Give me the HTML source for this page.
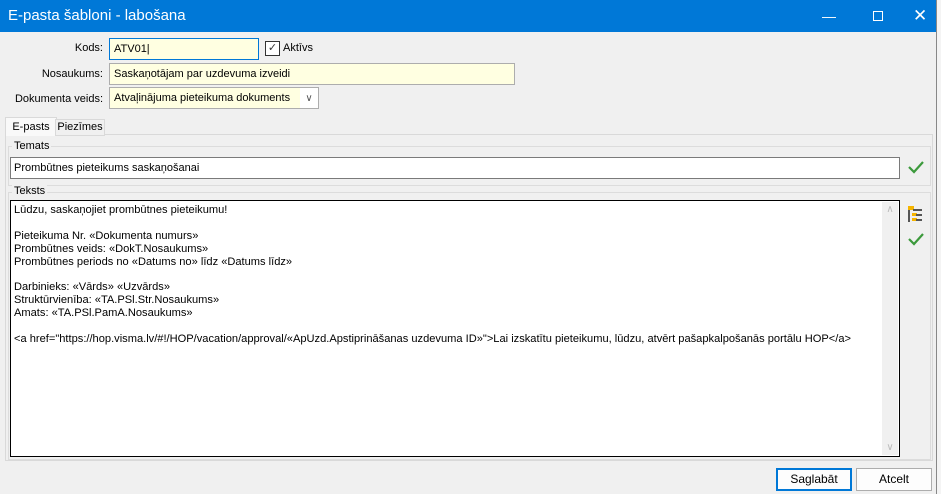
<!DOCTYPE html><html><head><meta charset="utf-8"><style>
body{margin:0;width:941px;height:494px;background:#fff;font-family:"Liberation Sans",sans-serif;font-size:11px;color:#000;position:relative;overflow:hidden}
.a{position:absolute}
.win{left:0;top:0;width:936px;height:494px;background:#f0f0f0;border-right:1px solid #888}
.title{left:0;top:0;width:936px;height:32px;background:#0078d7;color:#fff;font-size:15px;line-height:32px}
.lbl{text-align:right;width:100px;left:3px}
.inp{background:#ffffe1;border:1px solid #adadad;box-sizing:border-box;padding-left:4px;line-height:19px}
.grp{border:1px solid #dcdcdc;box-sizing:border-box}
.btn{border:1px solid #adadad;background:#fdfdfd;box-sizing:border-box;text-align:center;line-height:21px;height:23px;font-size:12px}
</style></head><body>
<div class="a" style="left:936px;top:0;width:5px;height:494px;background:#f4f4f4"></div>
<div class="a win"></div>
<div class="a title"><span style="margin-left:8px">E-pasta šabloni - labošana</span>
<span class="a" style="left:822px;top:0;font-size:14px">&#8212;</span>
<span class="a" style="left:873px;top:11px;width:8px;height:8px;border:1px solid #fff"></span>
<span class="a" style="left:913px;top:0;font-size:17px">✕</span></div>
<div class="a lbl" style="top:42px">Kods:</div>
<div class="a inp" style="left:109px;top:38px;width:150px;height:22px;border-color:#0078d7;line-height:20px">ATV01|</div>
<div class="a" style="left:265px;top:41px;width:13px;height:13px;border:1px solid #333;background:#fff;font-size:11px;line-height:13px;text-align:center;color:#333">✓</div>
<div class="a" style="left:283px;top:42px">Aktīvs</div>
<div class="a lbl" style="top:68px">Nosaukums:</div>
<div class="a inp" style="left:109px;top:63px;width:406px;height:22px;line-height:20px">Saskaņotājam par uzdevuma izveidi</div>
<div class="a lbl" style="top:93px">Dokumenta veids:</div>
<div class="a inp" style="left:109px;top:87px;width:210px;height:22px;line-height:21px">Atvaļinājuma pieteikuma dokuments<span class="a" style="left:190px;top:0;width:18px;height:20px;background:#fff;color:#555;font-size:10px;text-align:center">&#8744;</span></div>
<div class="a" style="left:5px;top:134px;width:928px;height:327px;background:#f0f0f0;border:1px solid #d9d9d9;box-sizing:border-box"></div>
<div class="a" style="left:5px;top:117px;width:50px;height:18px;background:#f9f9f9;border:1px solid #d9d9d9;border-bottom:none;text-align:center;line-height:18px">E-pasts</div>
<div class="a" style="left:55px;top:119px;width:48px;height:15px;background:#f0f0f0;border:1px solid #d9d9d9;text-align:center;line-height:15px">Piezīmes</div>
<div class="a grp" style="left:8px;top:146px;width:923px;height:40px"></div>
<div class="a" style="left:12px;top:140px;background:#f0f0f0;padding:0 2px">Temats</div>
<div class="a" style="left:10px;top:157px;width:890px;height:22px;border:1px solid #7a7a7a;background:#fff;box-sizing:border-box;padding-left:3px;line-height:21px">Prombūtnes pieteikums saskaņošanai</div>
<svg class="a" style="left:908px;top:160px" width="16" height="14"><path d="M1 7 L6 12 L15 2" stroke="#3c9a3c" stroke-width="2.2" fill="none"/></svg>
<div class="a grp" style="left:8px;top:192px;width:923px;height:268px"></div>
<div class="a" style="left:12px;top:185px;background:#f0f0f0;padding:0 2px">Teksts</div>
<div class="a" style="left:10px;top:200px;width:890px;height:257px;border:1px solid #000;background:#fff;box-sizing:border-box"></div>
<div class="a" style="left:882px;top:202px;width:16px;height:253px;background:#f0f0f0;color:#bbb;font-size:10px;text-align:center"><div style="margin-top:2px">&#8743;</div><div style="position:absolute;bottom:2px;width:16px">&#8744;</div></div>
<div class="a" style="left:14px;top:204px;line-height:12.9px;white-space:pre;font-size:11.1px">Lūdzu, saskaņojiet prombūtnes pieteikumu!

Pieteikuma Nr. «Dokumenta numurs»
Prombūtnes veids: «DokT.Nosaukums»
Prombūtnes periods no «Datums no» līdz «Datums līdz»

Darbinieks: «Vārds» «Uzvārds»
Struktūrvienība: «TA.PSl.Str.Nosaukums»
Amats: «TA.PSl.PamA.Nosaukums»

&lt;a href="https://hop.visma.lv/#!/HOP/vacation/approval/«ApUzd.Apstiprināšanas uzdevuma ID»"&gt;Lai izskatītu pieteikumu, lūdzu, atvērt pašapkalpošanās portālu HOP&lt;/a&gt;</div>
<svg class="a" style="left:907px;top:205px" width="16" height="18"><rect x="1" y="1" width="2" height="16" fill="#555"/><rect x="1" y="1" width="6" height="4" fill="#f5b400"/><rect x="6" y="4" width="9" height="2" fill="#555"/><rect x="5" y="8" width="5" height="3" fill="#f5b400"/><rect x="9" y="9" width="6" height="2" fill="#555"/><rect x="5" y="13" width="5" height="3" fill="#f5b400"/><rect x="9" y="14" width="6" height="2" fill="#555"/></svg>
<svg class="a" style="left:908px;top:232px" width="16" height="14"><path d="M1 7 L6 12 L15 2" stroke="#3c9a3c" stroke-width="2.2" fill="none"/></svg>
<div class="a btn" style="left:776px;top:468px;width:76px;border-color:#0078d7;border-width:2px;line-height:19px">Saglabāt</div>
<div class="a btn" style="left:856px;top:468px;width:76px">Atcelt</div>
</body></html>
